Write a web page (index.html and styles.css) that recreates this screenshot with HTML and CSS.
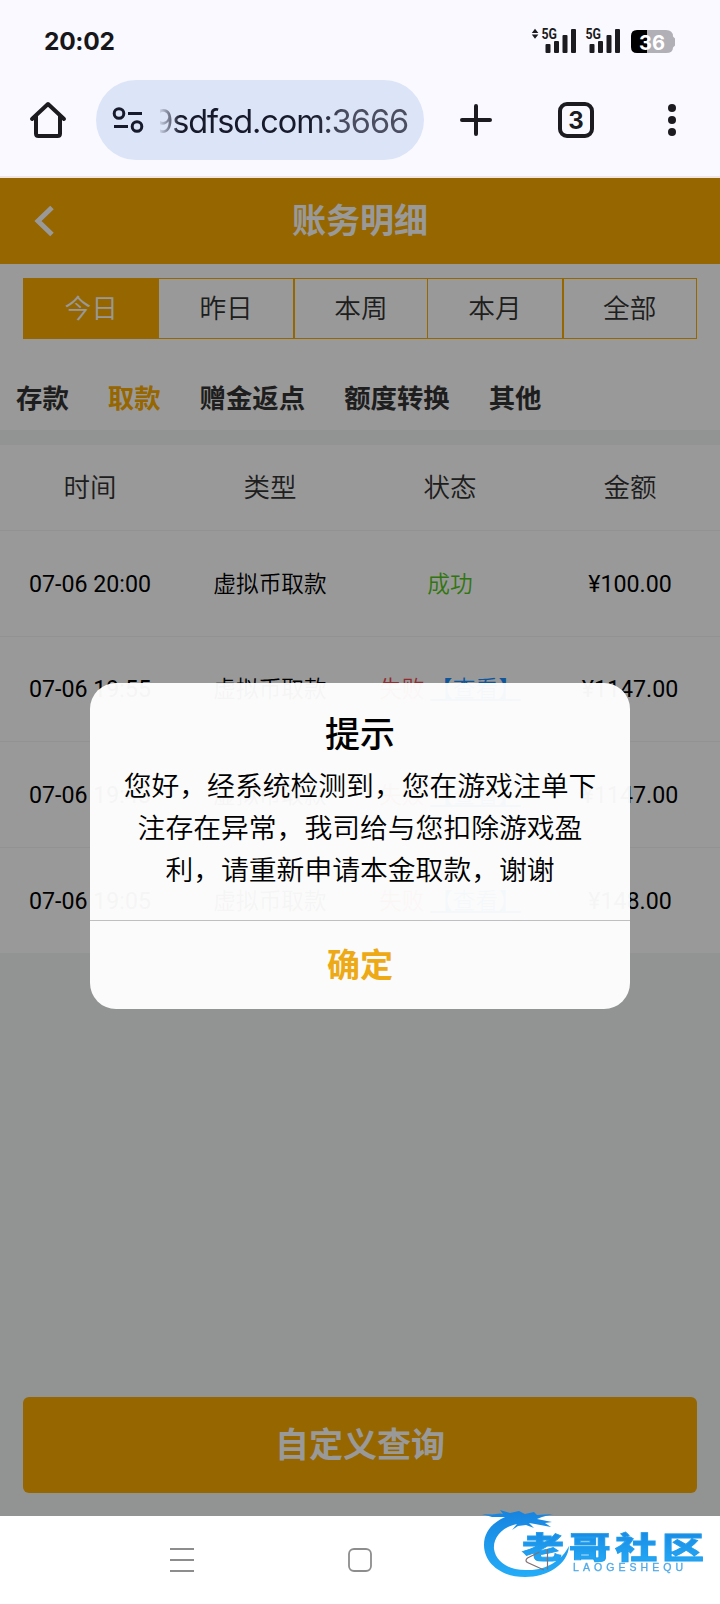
FILE: index.html
```html
<!DOCTYPE html>
<html lang="zh-CN">
<head>
<meta charset="utf-8">
<title>账务明细</title>
<link rel="stylesheet" href="styles.css">
</head>
<body>
<div class="phone">
  <div class="status-bar">
    <span class="clock">20:02</span>
    <svg class="status-icons" width="150" height="30" viewBox="0 0 150 30">
      <path class="ink" d="M5 2.8 8.4 7H1.8zM5 12.8 8.4 8.6H1.8z"/>
      <text class="net" x="11.500" y="12.500" textLength="15.500" lengthAdjust="spacingAndGlyphs">5G</text>
      <g class="ink">
        <rect x="15.500" y="18" width="5" height="9" rx="1"/><rect x="24" y="15" width="5" height="12" rx="1"/>
        <rect x="32.500" y="9" width="5" height="18" rx="1"/><rect x="41" y="3" width="5" height="24" rx="1"/>
      </g>
      <text class="net" x="55.500" y="12.500" textLength="15.500" lengthAdjust="spacingAndGlyphs">5G</text>
      <g class="ink">
        <rect x="59.500" y="18" width="5" height="9" rx="1"/><rect x="68" y="15" width="5" height="12" rx="1"/>
        <rect x="76.500" y="9" width="5" height="18" rx="1"/><rect x="85" y="3" width="5" height="24" rx="1"/>
      </g>
      <path fill="#b1b0b6" d="M117 4h19q7 0 7 6.500l2 2v7l-2 2q0 5.500-7 5.500h-19z"/>
      <path fill="#000" d="M117 4h-10q-6 0-6 6v11q0 6 6 6h10z"/>
      <text class="level" x="109" y="24" textLength="26" lengthAdjust="spacingAndGlyphs">36</text>
    </svg>
  </div>

  <div class="browser-bar">
    <svg class="home" width="40" height="40" viewBox="0 0 40 40"><path d="M4 19 20 4l16 15M8 16v17.500q0 2.500 2.500 2.500h19q2.500 0 2.500-2.500V16"/></svg>
    <div class="address">
      <svg width="32" height="28" viewBox="0 0 32 28"><circle cx="7" cy="7.500" r="4.800"/><circle cx="25" cy="20.500" r="4.800"/><path d="M16 7.500h14M2 20.500h14"/></svg>
      <div class="url">9sdfsd.com:3666</div>
    </div>
    <svg class="plus" width="32" height="32" viewBox="0 0 32 32"><path d="M2 16h28M16 2v28"/></svg>
    <div class="tab-count">3</div>
    <svg class="more" width="8" height="32" viewBox="0 0 8 32"><circle cx="4" cy="4" r="4"/><circle cx="4" cy="16" r="4"/><circle cx="4" cy="28" r="4"/></svg>
  </div>

  <main class="page">
    <header class="title-bar">
      <svg width="20" height="32" viewBox="0 0 20 32"><path d="M18 2.500 4 16l14 13.500"/></svg>
      <h1>账务明细</h1>
    </header>
    <section class="filters">
      <div class="periods">
        <span class="period active">今日</span><span class="period">昨日</span><span class="period">本周</span><span class="period">本月</span><span class="period">全部</span>
      </div>
      <nav class="kinds">
        <span>存款</span><span class="current">取款</span><span>赠金返点</span><span>额度转换</span><span>其他</span>
      </nav>
    </section>
    <section class="records">
      <div class="row head"><span>时间</span><span>类型</span><span>状态</span><span>金额</span></div>
      <div class="row"><span class="num">07-06 20:00</span><span>虚拟币取款</span><span class="ok">成功</span><span class="num">¥100.00</span></div>
      <div class="row"><span class="num">07-06 19:55</span><span>虚拟币取款</span><span class="fail">失败 <a>【查看】</a></span><span class="num">¥1147.00</span></div>
      <div class="row"><span class="num">07-06 19:43</span><span>虚拟币取款</span><span class="fail">失败 <a>【查看】</a></span><span class="num">¥1147.00</span></div>
      <div class="row last"><span class="num">07-06 19:05</span><span>虚拟币取款</span><span class="fail">失败 <a>【查看】</a></span><span class="num">¥148.00</span></div>
    </section>
    <div class="query">自定义查询</div>

    <div class="overlay">
      <div class="dialog">
        <div class="message">
          <h2>提示</h2>
          <p>您好，经系统检测到，您在游戏注单下<br>注存在异常，我司给与您扣除游戏盈<br>利，请重新申请本金取款，谢谢</p>
        </div>
        <div class="confirm">确定</div>
      </div>
    </div>
  </main>

  <div class="nav-bar">
    <svg width="24" height="26" viewBox="0 0 24 26"><path d="M0 2h24M0 13h24M0 24h24"/></svg>
    <svg width="24" height="26" viewBox="0 0 24 26"><rect x="1" y="2" width="22" height="22" rx="5"/></svg>
    <svg width="24" height="26" viewBox="0 0 24 26"></svg>
  </div>

  <svg class="watermark" width="240" height="80" viewBox="0 0 240 80">
    <defs>
      <linearGradient id="blue" x1="0" y1="0" x2="0" y2="1"><stop offset="0" stop-color="#1783df"/><stop offset="1" stop-color="#24adf8"/></linearGradient>
    </defs>
    <path fill="url(#blue)" d="M2 14 12 14.500 20 13.500 23 14 20 10 30 13 39 11 45 14 54 12 57 15 73 14 62 17 57 19 72 22 65 23 71 27 55 24 49 23 54 28 46 25 38 26 32 30 37 24C22 27 13 38 14 49 16 63 31 71 49 70 67 70 82 60 89 46 88 64 68 77 45 77 21 77 4 63 4 45 4 32 12 23 25 17L12 17z"/>
    <g transform="translate(42 58) scale(1.400 1)"><text class="brand" x="0" y="0" textLength="130">老哥社区</text></g>
    <text class="latin" x="93" y="71" textLength="110">LAOGESHEQU</text>
    <path fill="none" stroke="#806f70" stroke-width="1.200" d="M67.500 49v20.500M64 70 47.500 62.500q-3-2 0-4.500l12-6"/>
  </svg>
</div>
</body>
</html>
```
FILE: styles.css
```css
* { box-sizing: border-box; }
body { margin: 0; font-family: Roboto, "Noto Sans CJK SC", sans-serif; }
h1, h2, p { margin: 0; }
.phone { position: relative; width: 720px; height: 1604px; display: flex; flex-direction: column; background: #faf9ff; overflow: hidden; }

.status-bar { height: 80px; padding: 26px 40px 0 44px; display: flex; justify-content: space-between; }
.clock { font: 650 24.500px/30px Inter, sans-serif; color: #17171b; letter-spacing: -.3px; }
.status-icons { display: block; }
.ink { fill: #1b1b20; }
.net { font: 700 14px Roboto, sans-serif; fill: #1b1b20; }
.level { font: 700 20px Inter, sans-serif; fill: #fff; }

.browser-bar { height: 98px; padding-left: 28px; display: flex; align-items: flex-start; border-bottom: 2px solid #f1e4e2; }
.browser-bar > svg, .tab-count { flex: none; }
.home { margin-top: 20px; fill: none; stroke: #1b1b20; stroke-width: 4; stroke-linecap: round; stroke-linejoin: round; }
.address { width: 328px; height: 80px; margin-left: 28px; padding-left: 16px; border-radius: 40px; background: #dce4f8; display: flex; align-items: center; flex: none; }
.address svg { flex: none; fill: none; stroke: #171a2a; stroke-width: 3; }
.url { width: 248px; margin-left: 16px; overflow: hidden; display: flex; justify-content: flex-end; font: 400 32.500px/50px Inter, sans-serif; letter-spacing: -1.100px; white-space: nowrap; background: linear-gradient(90deg, rgba(23, 26, 42, .1) 0, #171a2a 20px, #171a2a 150px, #4a4e60 185px); -webkit-background-clip: text; background-clip: text; color: transparent; padding-top: 4px; }
.plus { margin: 24px 0 0 36px; stroke: #1b1b20; stroke-width: 4; stroke-linecap: round; }
.tab-count { width: 36px; height: 36px; margin: 22px 0 0 66px; border: 4px solid #1b1b20; border-radius: 9px; font: 700 24px/29px Inter, sans-serif; text-align: center; color: #1b1b20; }
.more { margin: 24px 0 0 74px; fill: #1b1b20; }

.page { position: relative; height: 1338px; background: #f4f7f6; display: flex; flex-direction: column; }
.title-bar { height: 86px; background: #faaa00; display: flex; align-items: center; padding: 0 34px; }
.title-bar svg { fill: none; stroke: #fff; stroke-width: 5; }
.title-bar h1 { flex: 1; margin-right: 20px; text-align: center; font-size: 34px; line-height: 84px; color: #fff; font-weight: 700; }
.filters { height: 166px; background: #fff; padding: 14px 23px 0; }
.periods { height: 61px; display: grid; grid-template-columns: repeat(5, 1fr); border: 1px solid #faaa00; }
.period { font-size: 26.700px; line-height: 61px; height: 59px; font-weight: 350; text-align: center; color: #333; border-left: 1px solid #faaa00; }
.period:first-child { border-left: 0; }
.period:nth-child(3), .period:nth-child(5) { border-left-width: 2px; }
.period.active { background: #faaa00; color: #fff; }
.kinds { display: flex; gap: 39px; margin: 40px 0 0 -7px; font-size: 26.400px; line-height: 40px; font-weight: 700; color: #333; }
.kinds .current { color: #faaa00; }
.records { margin-top: 15px; background: #fff; }
.row { height: 105.500px; padding-bottom: 2px; border-bottom: 1px solid #f3f3f3; display: grid; grid-template-columns: repeat(4, 180px); align-items: center; text-align: center; font-size: 22.700px; color: #000; white-space: nowrap; font-weight: 350; }
.num { font-size: 23.200px; font-weight: 400; padding-top: 3px; }
.row.head { height: 86px; padding-bottom: 4px; font-size: 26.500px; color: #333; }
.ok { color: #52c41a; }
.fail { color: #f5464c; }
.fail a { color: #1890ff; text-decoration: underline; }
.row.last { border-bottom: 0; }
.query { height: 96px; margin: auto 23px 23px; border-radius: 6px; background: #faaa00; color: #fff; text-align: center; font-size: 34px; line-height: 96px; font-weight: 700; }

.overlay { position: absolute; inset: 0; background: rgba(0, 0, 0, .4); display: flex; justify-content: center; align-items: flex-start; padding-top: 505px; }
.dialog { width: 540px; height: 326px; border-radius: 26px; background: rgba(255, 255, 255, .96); text-align: center; }
.message { height: 238px; padding-top: 27px; border-bottom: 1px solid #bfbfc1; color: #000; }
.message h2 { font-size: 35px; line-height: 52px; font-weight: 500; }
.message p { margin-top: 4px; font-size: 27.800px; line-height: 42px; font-weight: 350; white-space: nowrap; }
.confirm { font-size: 33px; line-height: 90px; font-weight: 700; color: #edaa16; }

.nav-bar { flex: 1; background: #fff; display: flex; justify-content: space-between; padding: 31px 170px 0; }
.nav-bar svg { fill: none; stroke: #8d8d8d; stroke-width: 1.800; }
.watermark { position: absolute; left: 480px; top: 1500px; filter: blur(.5px); }
.brand { font: 900 30px "Noto Sans CJK SC", sans-serif; fill: url(#blue); stroke: #219cec; stroke-width: .8; }
.latin { font: 400 10.500px "Liberation Sans", sans-serif; fill: #4fa9e8; stroke: #4fa9e8; stroke-width: .3; }
```
